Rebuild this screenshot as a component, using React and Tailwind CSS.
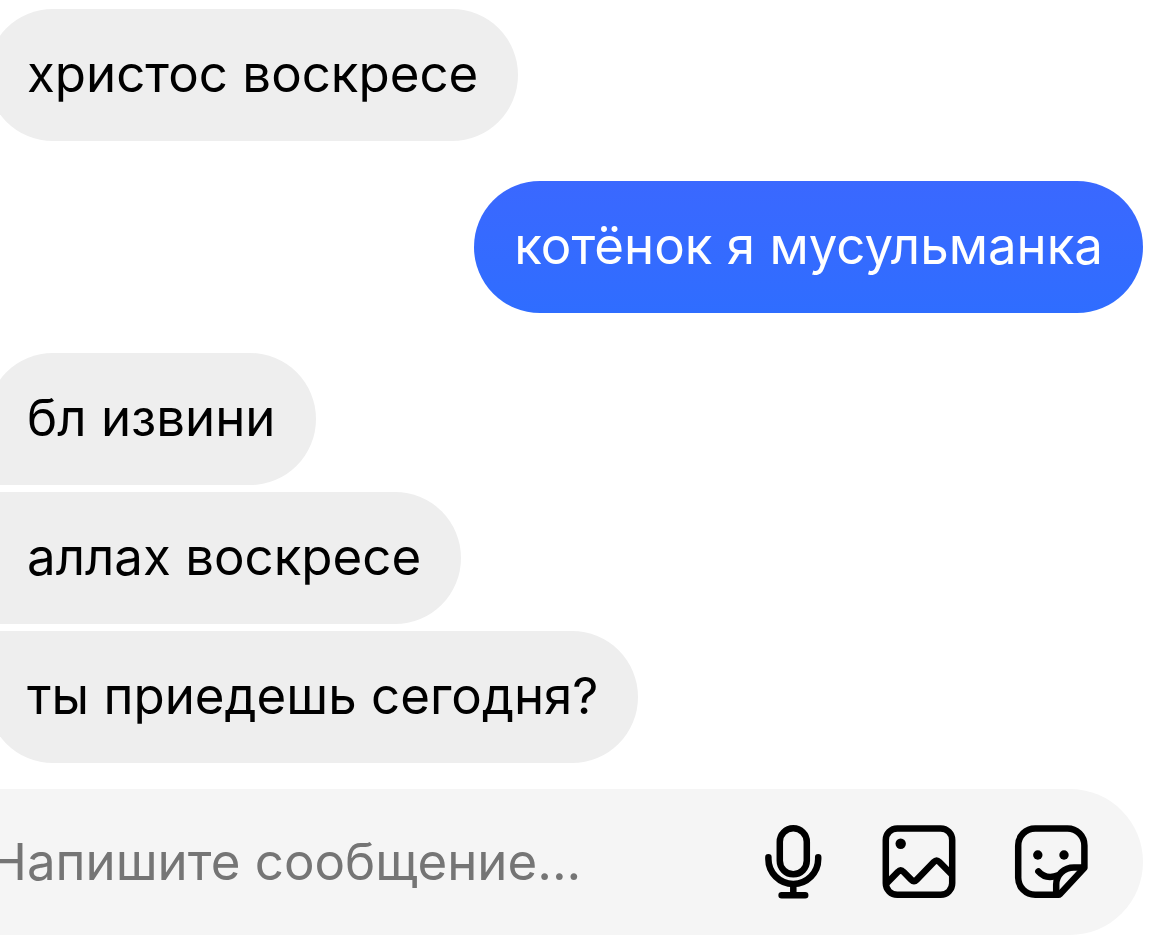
const messages = [
  { text: 'христос воскресе', mine: false, shape: 'rounded-[66px]', gap: 'mt-0' },
  { text: 'котёнок я мусульманка', mine: true, shape: 'rounded-[66px]', gap: 'mt-10' },
  { text: 'бл извини', mine: false, shape: 'rounded-[66px] rounded-bl-xl', gap: 'mt-10' },
  { text: 'аллах воскресе', mine: false, shape: 'rounded-r-[66px] rounded-l-xl', gap: 'mt-[7px]' },
  { text: 'ты приедешь сегодня?', mine: false, shape: 'rounded-[66px] rounded-tl-xl', gap: 'mt-[7px]' },
];

const stroke = {
  fill: 'none',
  stroke: 'currentColor',
  strokeWidth: 6.5,
  strokeLinecap: 'round',
  strokeLinejoin: 'round',
};

function MicIcon() {
  return (
    <svg viewBox="0 0 60 74" className="h-[74px] w-[60px]" aria-hidden="true" {...stroke}>
      <rect x="15.8" y="3.3" width="27" height="46" rx="13.5" />
      <path d="M4.4 32.3V34a24.9 24.9 0 0 0 49.8 0v-1.7M29.3 59v11M17.6 70.2h23.6" />
    </svg>
  );
}

function PhotoIcon() {
  return (
    <svg viewBox="0 0 74 74" className="size-[74px]" aria-hidden="true" {...stroke}>
      <rect x="3.8" y="3.4" width="66.4" height="66.4" rx="11.5" />
      <circle cx="18.7" cy="18.7" r="5.2" fill="currentColor" stroke="none" />
      <path d="M4.5 58.5L16 46.8q2.7-3 5.4 0l7.8 7.8q2.8 2.8 5.6 0L51.8 37q2.8-2.8 5.6 0L69.5 49.2" />
    </svg>
  );
}

function StickerIcon() {
  return (
    <svg viewBox="0 0 74 74" className="size-[74px]" aria-hidden="true" {...stroke}>
      <path d="M44.5 69.8H21.2a17 17 0 0 1-17-17V20.4a17 17 0 0 1 17-17h32.2a17 17 0 0 1 17 17v22.4L45.8 69.2q-.6.6-1.3.6z" />
      <path d="M69.5 42.4H60C50 42.4 42.2 50 42.2 59.5V69" />
      <path d="M24.4 46.4C29.5 52.3 37 53 44 50.4" />
      <circle cx="23.8" cy="30" r="4.7" fill="currentColor" stroke="none" />
      <circle cx="50" cy="30" r="4.7" fill="currentColor" stroke="none" />
    </svg>
  );
}

export default function App() {
  return (
    <main className="min-h-screen overflow-hidden bg-white pt-[9px] pr-[27px] font-['Inter','Noto_Sans',sans-serif] text-[51px] leading-[60px] text-black">
      <ul className="-ml-[13px] flex flex-col">
        {messages.map((m) => (
          <li
            key={m.text}
            className={`px-10 pt-[35px] pb-[37px] whitespace-nowrap ${m.shape} ${m.gap} ${
              m.mine
                ? 'self-end bg-linear-to-b from-[#3a68ff] to-[#2f6dff] text-white'
                : 'self-start bg-[#eeeeee]'
            }`}
          >
            {m.text}
          </li>
        ))}
      </ul>
      <form
        className="mt-[26px] -ml-24 flex h-[146px] items-center rounded-full bg-[#f5f5f5] pr-[55px] pl-[85px]"
        onSubmit={(e) => e.preventDefault()}
      >
        <input
          type="text"
          aria-label="Сообщение"
          placeholder="Напишите сообщение..."
          className="h-20 min-w-0 flex-1 bg-transparent pb-[2px] outline-none placeholder:text-[#757575]"
        />
        <div className="flex items-center gap-[58px]">
          <button type="button" aria-label="Голосовое сообщение"><MicIcon /></button>
          <button type="button" aria-label="Фото"><PhotoIcon /></button>
          <button type="button" aria-label="Стикер"><StickerIcon /></button>
        </div>
      </form>
    </main>
  );
}
